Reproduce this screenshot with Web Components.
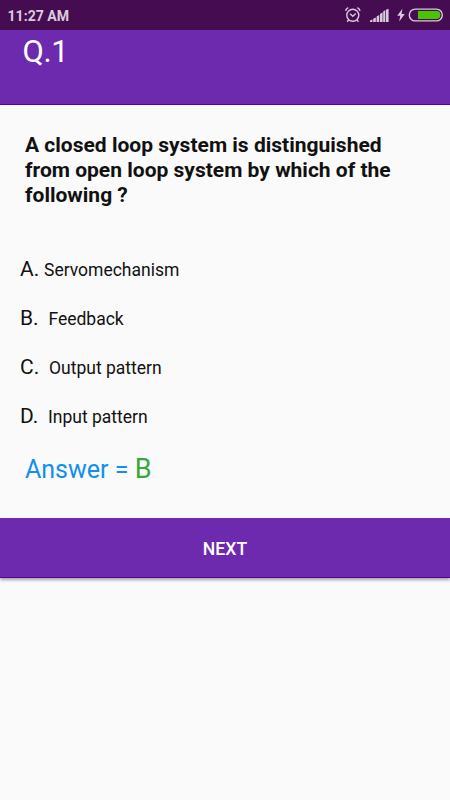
<!DOCTYPE html>
<html lang="en">
<head>
<meta charset="utf-8">
<title>Quiz</title>
<style>
html,body{margin:0;padding:0;background:#fafafa;font-family:Roboto,"Liberation Sans",sans-serif}
</style>
</head>
<body>
<quiz-app></quiz-app>
<script>
const define=(name,html)=>{
  const t=document.createElement('template');
  t.innerHTML=html;
  customElements.define(name,class extends HTMLElement{
    constructor(){super();this.attachShadow({mode:'open'}).append(t.content.cloneNode(true));}
  });
};
define('status-bar',`<style>
:host{display:flex;justify-content:space-between;height:30px;background:#450c52;color:#d9cbdd;box-sizing:border-box;padding-left:7.5px}
.time{font-size:14.1px;font-weight:700;line-height:32px}
svg{display:block}
</style><span class="time">11:27 AM</span>
<svg width="110" height="30" viewBox="340 0 110 30" fill="none" stroke="#d9cbdd">
<circle cx="352.8" cy="15.2" r="6" stroke-width="1.4"/>
<path d="M345.6 10.8c.3-1.5 1.2-2.6 2.7-3.2M360 10.8c-.3-1.5-1.2-2.6-2.7-3.2" stroke-width="1.5"/>
<path d="M350 13.8l2.8 2.4 3-2.7" stroke-width="1.4"/>
<path d="M348.6 20l-1.5 1.7M357 20l1.5 1.7" stroke-width="1.4"/>
<g fill="#d9cbdd" stroke="none"><path d="M370 22v-1.6l2.4-1V22zM373.2 22v-3.2l2.6-1.2V22zM376.6 22v-5.4l2.6-1.7V22zM380 22v-8l2.6-1.8V22zM383.2 22V11.6l2.1-1.5V22zM386 22V9.8L388.6 8.8V22z"/>
<path d="M402.4 8.8l-5.2 6.9h3.1L399.2 21.4l5.6-7.5h-3.2z"/></g>
<rect x="409.3" y="9.1" width="33" height="11.8" rx="5.9" stroke-width="1.4"/>
<path d="M418 11.1h18.5a3.9 3.9 0 0 1 0 7.8H418z" fill="#4cc500" stroke="none"/>
</svg>`);
define('title-bar',`<style>
:host{display:block;height:75px;box-sizing:border-box;background:#6d2aae;border-bottom:1px solid #5600a0;color:#fff;padding-left:22.5px;font-size:31px;letter-spacing:-.4px;line-height:43px}
</style><slot></slot>`);
define('quiz-question',`<style>
:host{display:block;box-sizing:border-box;padding:27px 25px 0;font-size:21.03px;line-height:25px;font-weight:700;color:#111;white-space:nowrap;height:140px}
</style><slot></slot>`);
define('quiz-option',`<style>
:host{display:flex;align-items:baseline;height:49px;padding-left:20px;color:#111;line-height:48px}
.l{font-size:21px;width:var(--lead,28.4px)}
.t{font-size:17.5px}
</style><span class="l"><slot name="letter"></slot></span><span class="t"><slot></slot></span>`);
define('quiz-answer',`<style>
:host{display:block;height:77px;padding-left:25px;font-size:25px;line-height:56px;color:#118ff0}
span{font-size:27px;color:#36a83b}
</style>Answer = <span><slot></slot></span>`);
define('next-button',`<style>
:host{display:block;height:60px;box-sizing:border-box;background:#6d2aae;border-bottom:1px solid #5600a0;box-shadow:0 2px 3px rgba(0,0,0,.35);color:#fff;text-align:center;font-size:17.6px;font-weight:500;line-height:63px}
</style><slot></slot>`);
define('quiz-app',`<style>
:host{display:block;height:800px;overflow:hidden;background:#fafafa}
</style>
<status-bar></status-bar>
<title-bar>Q.1</title-bar>
<quiz-question>A closed loop system is distinguished<br>from open loop system by which of the<br>following ?</quiz-question>
<quiz-option style="--lead:24px"><span slot="letter">A.</span>Servomechanism</quiz-option>
<quiz-option><span slot="letter">B.</span>Feedback</quiz-option>
<quiz-option style="--lead:29px"><span slot="letter">C.</span>Output pattern</quiz-option>
<quiz-option style="--lead:28px"><span slot="letter">D.</span>Input pattern</quiz-option>
<quiz-answer>B</quiz-answer>
<next-button>NEXT</next-button>`);
</script>
</body>
</html>
